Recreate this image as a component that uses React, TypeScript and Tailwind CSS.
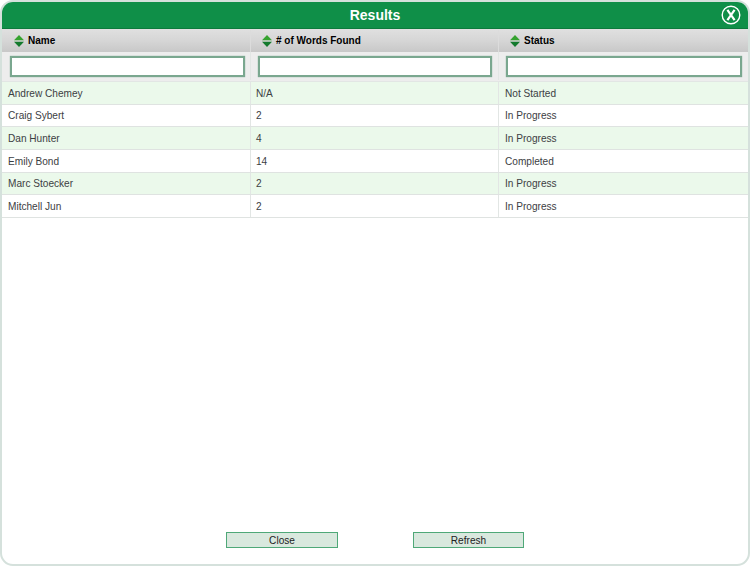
import React from "react";

const rows = [
  ["Andrew Chemey", "N/A", "Not Started"],
  ["Craig Sybert", "2", "In Progress"],
  ["Dan Hunter", "4", "In Progress"],
  ["Emily Bond", "14", "Completed"],
  ["Marc Stoecker", "2", "In Progress"],
  ["Mitchell Jun", "2", "In Progress"],
];

function SortIcon() {
  return (
    <svg width="10" height="12" viewBox="0 0 10 12" className="shrink-0 -mt-[1px]">
      <path d="M5 0 L10 5.3 L0 5.3 Z" fill="#35a32f" />
      <path d="M0 6.7 L10 6.7 L5 12 Z" fill="#137a2d" />
    </svg>
  );
}

function CloseIcon() {
  return (
    <svg width="20" height="20" viewBox="0 0 20 20">
      <circle cx="10" cy="10" r="8.8" fill="none" stroke="#fff" strokeWidth="1.4" />
      <path d="M6.4 4.8 L13.6 15.2 M13.6 4.8 L6.4 15.2" stroke="#fff" strokeWidth="2.2" fill="none" />
    </svg>
  );
}

const textPad = ["pl-[6px]", "pl-[5px]", "pl-[6px]"];
const headPad = ["pl-[12px]", "pl-[11px]", "pl-[11px]"];
const inputPad = ["pl-[8px] pr-[5px]", "pl-[7px] pr-[6px]", "pl-[7px] pr-[6px]"];

export default function App() {
  return (
    <div className="w-[750px] h-[566px] bg-white font-['Liberation_Sans',Arial,sans-serif]">
      <div className="w-full h-full flex flex-col rounded-[13px] border-2 border-[#d5e1dc] overflow-hidden bg-white">
        <div className="h-[27px] shrink-0 relative flex items-center justify-center bg-[#0f8f48] border-b border-[#0c7a3c]">
          <span className="text-[14px] font-bold text-white">Results</span>
          <div className="absolute right-[7px] top-[3px]">
            <CloseIcon />
          </div>
        </div>
        <div className="grid grid-cols-[249px_248px_1fr] h-[23px] shrink-0 bg-gradient-to-b from-[#e0e0e0] via-[#d6d6d6] to-[#c8c8c8] pt-[1px]">
          {["Name", "# of Words Found", "Status"].map((h, i) => (
            <div key={h} className={`flex items-center gap-[4px] ${headPad[i]} ${i < 2 ? "border-r border-[#dcdcdc]" : ""}`}>
              <SortIcon />
              <span className="text-[10px] font-bold text-black leading-none">{h}</span>
            </div>
          ))}
        </div>
        <div className="grid grid-cols-[249px_248px_1fr] h-[30px] shrink-0 bg-[#ededed] border-b border-[#e2e6e4] pb-[1px]">
          {[0, 1, 2].map((i) => (
            <div key={i} className={`flex items-center ${inputPad[i]} ${i < 2 ? "border-r border-[#e2e6e4]" : ""}`}>
              <input className="w-full h-[21px] bg-white border-2 border-[#7aa78f] shadow-[0_0_1px_#7aa78f] outline-none" aria-label="filter" />
            </div>
          ))}
        </div>
        {rows.map((r, i) => (
          <div
            key={r[0]}
            className={`grid grid-cols-[249px_248px_1fr] h-[22.67px] shrink-0 border-b border-[#dfe3e1] text-[10.1px] text-[#3c4043] ${i % 2 === 0 ? "bg-[#ebf9eb]" : "bg-white"}`}
          >
            {r.map((c, j) => (
              <div key={j} className={`flex items-center pt-[1px] min-w-0 ${textPad[j]} ${j < 2 ? "border-r border-[#e2e6e4]" : ""}`}>{c}</div>
            ))}
          </div>
        ))}
        <div className="flex-1" />
        <div className="flex justify-center gap-[75px] pb-[16px] shrink-0">
          <button className="w-[112px] h-[16px] flex items-center justify-center pt-[1px] bg-[#d9e8de] border border-[#4fa878] text-[10.1px] text-[#222]">Close</button>
          <button className="w-[111px] h-[16px] flex items-center justify-center pt-[1px] bg-[#d9e8de] border border-[#4fa878] text-[10.1px] text-[#222]">Refresh</button>
        </div>
      </div>
    </div>
  );
}
